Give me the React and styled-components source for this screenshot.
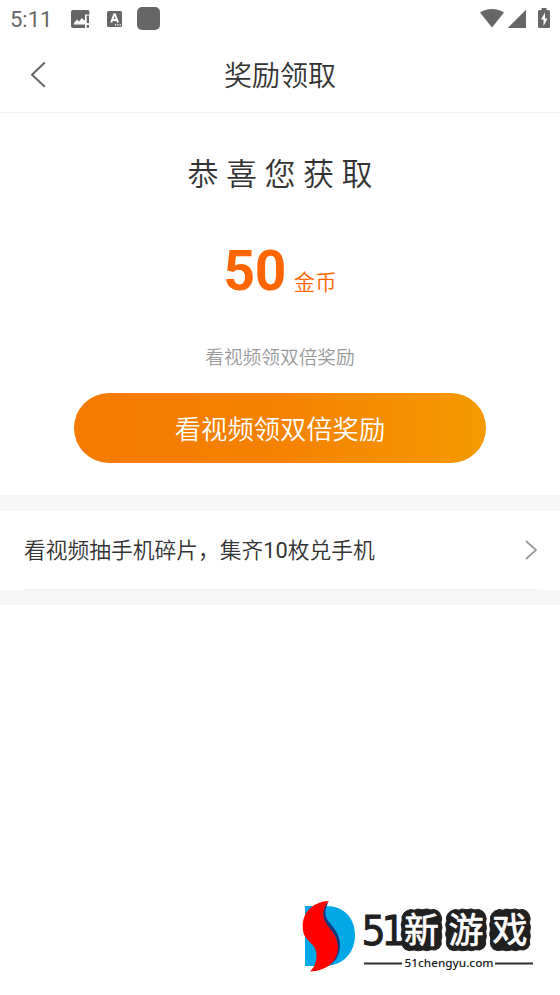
import React from "react";
import styled, { createGlobalStyle } from "styled-components";

const GlobalStyle = createGlobalStyle`
  * {
    box-sizing: border-box;
  }
  body {
    margin: 0;
    background: #ffffff;
    color: #333333;
    font-family: Roboto, "Noto Sans CJK SC", sans-serif;
  }
`;

const ScreenStyles = styled.div`
  width: 560px;
  height: 995px;
  display: flex;
  flex-direction: column;
  overflow: hidden;
`;

const StatusBarStyles = styled.div`
  height: 38px;
  flex-shrink: 0;
  display: flex;
  justify-content: space-between;
  padding-left: 10px;
  padding-right: 9px;
  color: #666666;
  .time {
    width: 60px;
    font-size: 22px;
    line-height: 40px;
  }
  .left {
    display: flex;
  }
  svg {
    display: block;
  }
`;

const HeaderStyles = styled.header`
  height: 75px;
  flex-shrink: 0;
  display: grid;
  grid-template-columns: 80px 1fr 80px;
  align-items: center;
  border-bottom: 1px solid #f3f3f3;
  h1 {
    margin: 0;
    padding-top: 4px;
    font-weight: 350;
    font-size: 28px;
    line-height: 40px;
    text-align: center;
  }
  svg {
    display: block;
    margin-left: 28px;
  }
`;

const RewardStyles = styled.section`
  height: 382px;
  flex-shrink: 0;
  display: flex;
  flex-direction: column;
  align-items: center;
  padding-top: 40px;
  h2 {
    margin: 0;
    font-weight: 350;
    font-size: 31px;
    line-height: 44px;
  }
`;

const Amount = styled.div`
  display: flex;
  align-items: baseline;
  height: 64px;
  margin-top: 42px;
  line-height: 64px;
  color: #ff6600;
  strong {
    font-weight: 700;
    font-size: 55px;
    letter-spacing: -0.4px;
  }
  span {
    margin-left: 8px;
    font-size: 21.3px;
    font-weight: 350;
  }
`;

const Hint = styled.p`
  margin: 41px 0 0;
  font-size: 18.7px;
  font-weight: 350;
  line-height: 28px;
  color: #999999;
`;

const WatchButton = styled.button`
  width: 412px;
  height: 70px;
  margin-top: 21px;
  padding: 4px 0 0;
  border: 0;
  border-radius: 35px;
  background: linear-gradient(90deg, #f57900, #f58200 50%, #f59a00);
  color: #ffffff;
  font-family: inherit;
  font-size: 26.3px;
  font-weight: 350;
  line-height: 66px;
`;

const Divider = styled.div`
  height: ${(props) => props.$height}px;
  flex-shrink: 0;
  background: #f6f6f6;
`;

const RowStyles = styled.div`
  height: 79px;
  flex-shrink: 0;
  margin: 0 23px 0 24px;
  display: flex;
  align-items: center;
  justify-content: space-between;
  border-bottom: 1px solid #f0f0f0;
  .label {
    padding-top: 2px;
    font-size: 21.75px;
    font-weight: 350;
    line-height: 32px;
  }
  .count {
    font-weight: 400;
  }
`;

const FooterStyles = styled.footer`
  display: flex;
  justify-content: flex-end;
  margin-top: auto;
  padding-right: 20px;
  padding-bottom: 15px;
`;

const StatusBar = () => (
  <StatusBarStyles>
    <div className="left">
      <div className="time">5:11</div>
      <svg width="94" height="38" viewBox="70 0 94 38" fill="currentColor">
        <path d="M73 10h14.500a2 2 0 0 1 2 2v2.500H85V28H73a2 2 0 0 1-2-2V12a2 2 0 0 1 2-2z" />
        <path d="M74 24.500V23l3-3.500 2 2 3-3.500 2 2.500 1.500-1.500v5.500z" fill="#fff" />
        <path d="M86.700 15.500h2.300v7.500h-2.300zM86.700 25h2.300v2.700h-2.300z" />
        <rect x="107" y="11" width="15" height="16" rx="1.500" />
        <path d="M111.200 22.500l3-8h.8l3 8M112.400 20h4.500" fill="none" stroke="#fff" strokeWidth="2" />
        <path d="M115 24.300h1.300v1.200H115zm2.300 0h1.300v1.200h-1.300zm2.300 0h1.300v1.200h-1.300z" fill="#fff" />
        <rect x="137" y="7" width="23" height="23" rx="5" />
      </svg>
    </div>
    <svg width="72" height="38" viewBox="479 0 72 38" fill="currentColor">
      <path d="M480 12.500c6.500-4.700 17.500-4.700 24 0L492 27.500z" />
      <path d="M526 9.700V28h-18.300z" />
      <path d="M539.500 10h2V8h5v2h2a1.500 1.500 0 0 1 1.500 1.500v15a1.500 1.500 0 0 1-1.500 1.500h-9a1.500 1.500 0 0 1-1.500-1.500v-15a1.500 1.500 0 0 1 1.500-1.500z" />
      <path d="M545 12.500l-4 7h2.500V26l4-7.500H545z" fill="#fff" />
    </svg>
  </StatusBarStyles>
);

const Header = ({ title }) => (
  <HeaderStyles>
    <svg width="20" height="28" viewBox="0 0 20 28" fill="none">
      <path d="M16.800 1.500L4 13.800l12.800 12" stroke="#666" strokeWidth="2" />
    </svg>
    <h1>{title}</h1>
  </HeaderStyles>
);

const Row = ({ children }) => (
  <RowStyles>
    <span className="label">{children}</span>
    <svg width="13" height="20" viewBox="0 0 13 20" fill="none">
      <path d="M2 1l10 9-10 9" stroke="#999" strokeWidth="1.800" />
    </svg>
  </RowStyles>
);

const tiles = [
  { char: "新", x: 401 },
  { char: "游", x: 445.5 },
  { char: "戏", x: 489.5 },
];

// stamp with worn edges, 42 x 43
const stamp =
  "M6 2.500L10 1l4 .7L17 .5l5 .8L26 .4l4 1L34 1l4 2 2 3 1.200 4-.7 4 1 5-.8 4 .6 5-.8 4 .2 4-2 3.500-4 2-4-.3-4 1-4-.8-5 .9-4-.8-5 .6-4-1.200-2.500-3L1.300 34l.5-4L.6 26l.9-5L.7 16l1-4L1.500 8l2-3.500z";

const Logo = () => (
  <svg width="240" height="80" viewBox="300 900 240 80">
    <path d="M305 906h21c19 0 29 13 29 29.500S343 966 325 966h-20z" fill="#00a8e8" />
    <path d="M328 903c-4 8-3 14 1 19 7 8 11 14 11 23 0 11-5 18-14 22l-4-1V905z" fill="#123c82" />
    <path d="M329 901c-5 5-7 12-4.500 19 3.500 8 13.500 15 13.500 27 0 15-12 24-28 24.500 6-6 8-14 5.500-22-3-8-12.800-9-12.800-23 0-16 12-25 26.300-25.500z" fill="#ff0000" />
    <text
      transform="translate(361.500 945) scale(0.95 1)"
      fontFamily="DejaVu Sans"
      fontSize="40"
      letterSpacing="-4.500"
      fill="#202020"
      stroke="#202020"
      strokeWidth="0.900"
      strokeLinejoin="round"
    >
      51
    </text>
    {tiles.map(({ char, x }) => (
      <g key={char}>
        <path d={stamp} transform={`translate(${x - 0.5} 908.500)`} fill="#202020" stroke="#202020" strokeWidth="1" strokeLinejoin="round" />
        <text
          x={x + 20.5}
          y="943"
          textAnchor="middle"
          fontFamily="Noto Sans CJK SC"
          fontSize="35"
          fontWeight="400"
          fill="#fff"
          stroke="#fff"
          strokeWidth="0.700"
          strokeLinejoin="round"
        >
          {char}
        </text>
      </g>
    ))}
    <path d="M364 963.500h38M495 963.500h38" stroke="#303030" strokeWidth="2" />
    <text x="404.500" y="967.300" fontFamily="Noto Sans" fontSize="11" fontWeight="500" textLength="89" lengthAdjust="spacingAndGlyphs" fill="#202020">51chengyu.com</text>
  </svg>
);

const App = () => (
  <ScreenStyles>
    <GlobalStyle />
    <StatusBar />
    <Header title="奖励领取" />
    <RewardStyles>
      <h2>恭 喜 您 获 取</h2>
      <Amount>
        <strong>50</strong>
        <span>金币</span>
      </Amount>
      <Hint>看视频领双倍奖励</Hint>
      <WatchButton>看视频领双倍奖励</WatchButton>
    </RewardStyles>
    <Divider $height={16} />
    <Row>
      看视频抽手机碎片，集齐<span className="count">10</span>枚兑手机
    </Row>
    <Divider $height={15} />
    <FooterStyles>
      <Logo />
    </FooterStyles>
  </ScreenStyles>
);

export default App;
